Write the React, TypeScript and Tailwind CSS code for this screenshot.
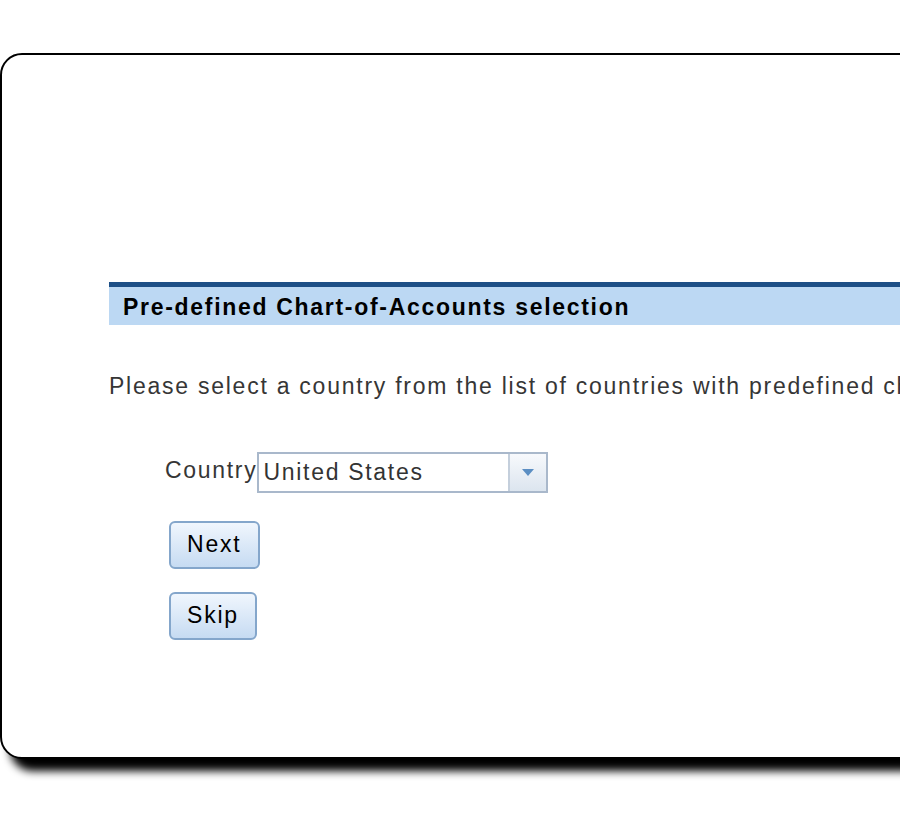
export default function App() {
  return (
    <div className="w-[900px] h-[830px] overflow-hidden bg-white" style={{ fontFamily: '"Liberation Sans", Arial, sans-serif' }}>
      <div className="mt-[53px] w-[1200px] h-[706px] border-2 border-black rounded-[22px] bg-white shadow-[10px_12px_8px_rgba(0,0,0,1)] pt-[227px] pl-[107px]">
        <div className="border-t-[5px] border-[#1d4f86] bg-[#bcd8f3] h-[43px] pl-[14px] pt-[2px] flex items-center">
          <h2 className="text-[23px] font-bold text-black tracking-[1.7px]">Pre-defined Chart-of-Accounts selection</h2>
        </div>

        <p className="mt-[44px] text-[23px] text-[#363636] tracking-[1.75px] whitespace-nowrap">
          Please select a country from the list of countries with predefined charts of accounts, or skip this step.
        </p>

        <div className="mt-[48px] pl-[56px] flex items-center">
          <label className="text-[23px] text-[#363636] tracking-[1.7px] -mt-[4px]">Country</label>
          <div className="w-[291px] h-[41px] border-2 border-[#a9b8cb] flex bg-white">
            <div className="flex-1 px-[4px] flex items-center text-[23px] text-[#333] tracking-[1.7px]">United States</div>
            <div className="w-[38px] border-l-2 border-[#c4cfdc] bg-gradient-to-b from-[#f7f9fc] to-[#dce5ef] flex items-center justify-center">
              <svg width="12" height="7" viewBox="0 0 12 7">
                <path d="M0 0 L12 0 L6 7 Z" fill="#5b8ec3" />
              </svg>
            </div>
          </div>
        </div>

        <div className="mt-[28px] pl-[60px] flex flex-col items-start gap-[23px]">
          <button className="h-[48px] px-[16px] rounded-[6px] border-2 border-[#84a6cb] bg-gradient-to-b from-[#f0f6fd] to-[#c6dbf2] text-[23px] text-black tracking-[1.8px]">
            Next
          </button>
          <button className="h-[48px] px-[16px] rounded-[6px] border-2 border-[#84a6cb] bg-gradient-to-b from-[#f0f6fd] to-[#c6dbf2] text-[23px] text-black tracking-[1.8px]">
            Skip
          </button>
        </div>
      </div>
    </div>
  );
}
